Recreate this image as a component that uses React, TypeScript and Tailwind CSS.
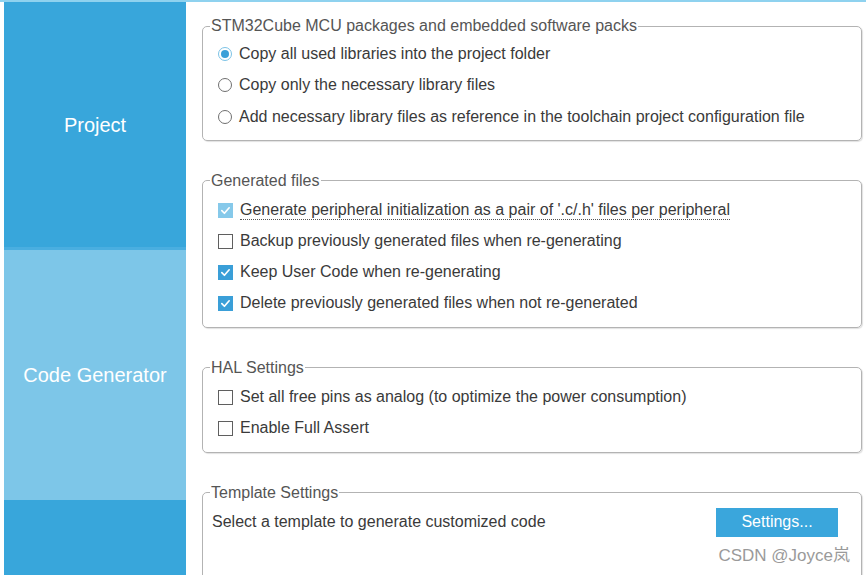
import type { ReactNode } from 'react'

function Radio({ checked }: { checked?: boolean }) {
  return checked ? (
    <span className="w-[14px] h-[14px] rounded-full border border-[#7cc3e6] bg-white flex items-center justify-center shrink-0">
      <span className="w-[8px] h-[8px] rounded-full bg-[#3a9fd8]" />
    </span>
  ) : (
    <span className="w-[14px] h-[14px] rounded-full border border-[#6f6f6f] bg-white shrink-0" />
  )
}

function Check({ checked, disabled }: { checked?: boolean; disabled?: boolean }) {
  if (!checked) return <span className="w-[15px] h-[15px] border border-[#5f5f5f] bg-white shrink-0" />
  return (
    <span className={`w-[15px] h-[15px] flex items-center justify-center shrink-0 ${disabled ? 'bg-[#86c9ea]' : 'bg-[#3a9fd8]'}`}>
      <svg width="11" height="11" viewBox="0 0 12 12" fill="none">
        <path d="M2 6.2 L4.8 9 L10 3" stroke="white" strokeWidth="1.8" strokeLinecap="round" strokeLinejoin="round" />
      </svg>
    </span>
  )
}

function Row({ icon, children, h = 'h-[31px]' }: { icon: ReactNode; children: ReactNode; h?: string }) {
  return (
    <div className={`${h} flex items-center gap-[7px] pl-[8px]`}>
      {icon}
      <span>{children}</span>
    </div>
  )
}

function Group({ title, children, className = '' }: { title: string; children: ReactNode; className?: string }) {
  return (
    <fieldset className={`shrink-0 border border-[#b3b3b3] rounded-[5px] px-[7px] shadow-[1px_1px_1px_rgba(0,0,0,0.12)] ${className}`}>
      <legend className="px-[1px] text-[#555] leading-[18px]">{title}</legend>
      {children}
    </fieldset>
  )
}

export default function App() {
  return (
    <div
      className="relative h-[575px] w-[866px] overflow-hidden bg-white border-t-2 border-[#8fd2ef] text-[16px] text-[#3a3a3a] flex"
      style={{ fontFamily: '"Liberation Sans", Arial, sans-serif' }}
    >
      <aside className="ml-[4px] w-[182px] flex flex-col text-white text-[20px]">
        <div className="h-[245px] bg-[#38a6db] flex items-center justify-center">Project</div>
        <div className="h-[3px] bg-[#4aaee0]" />
        <div className="h-[250px] bg-[#7dc6e8] flex items-center justify-center">Code Generator</div>
        <div className="flex-1 bg-[#38a6db]" />
      </aside>

      <main className="flex-1 pl-[16px] pr-[4px] pt-[15px] flex flex-col gap-[31px]">
        <Group title="STM32Cube MCU packages and embedded software packs" className="pt-[3px] pb-[7px]">
          <Row h="h-[31.5px]" icon={<Radio checked />}>Copy all used libraries into the project folder</Row>
          <Row h="h-[31.5px]" icon={<Radio />}>Copy only the necessary library files</Row>
          <Row h="h-[31.5px]" icon={<Radio />}>Add necessary library files as reference in the toolchain project configuration file</Row>
        </Group>

        <Group title="Generated files" className="pt-[5px] pb-[8px]">
          <Row icon={<Check checked disabled />}>
            <span className="border-b border-dotted border-[#555] pb-[1px]">
              Generate peripheral initialization as a pair of '.c/.h' files per peripheral
            </span>
          </Row>
          <Row icon={<Check />}>Backup previously generated files when re-generating</Row>
          <Row icon={<Check checked />}>Keep User Code when re-generating</Row>
          <Row icon={<Check checked />}>Delete previously generated files when not re-generated</Row>
        </Group>

        <Group title="HAL Settings" className="pt-[5px] pb-[8px]">
          <Row icon={<Check />}>Set all free pins as analog (to optimize the power consumption)</Row>
          <Row icon={<Check />}>Enable Full Assert</Row>
        </Group>

        <Group title="Template Settings" className="pt-[6px] h-[140px]">
          <div className="flex items-center justify-between pl-[2px] pr-[16px]">
            <span>Select a template to generate customized code</span>
            <button className="w-[122px] h-[29px] bg-[#3aa6dc] text-white text-[16px]">Settings...</button>
          </div>
        </Group>
      </main>

      <div
        className="absolute right-[16px] bottom-[7px] text-[17px] text-[#9a9a9a]"
        style={{ fontFamily: '"Liberation Sans", "Noto Sans CJK SC", sans-serif' }}
      >
        CSDN @Joyce岚
      </div>
    </div>
  )
}
